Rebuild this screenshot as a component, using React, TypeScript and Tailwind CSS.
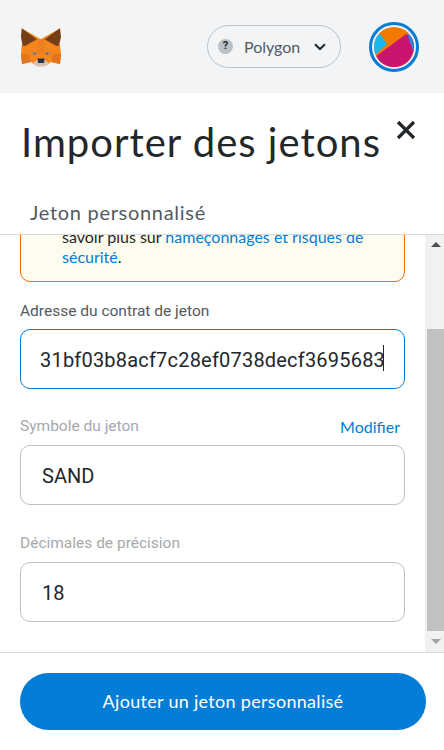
function FoxLogo() {
  return (
    <svg width="42" height="40" viewBox="0 0 42 40" className="shrink-0">
      {/* head */}
      <polygon points="1.7,18 4,16 20.7,12.3 37.5,16 40,18 41,27 40,37 31,35 27,38 15,38 11,35 2,37 1,27" fill="#f6851b" />
      <polygon points="1.7,1.3 20.7,12.3 40,1.3 38,10 30,14 12,14 4,10" fill="#f6851b" />
      {/* ears */}
      <polygon points="1.7,1.3 17,12.5 12,15 5,19 2.5,18.5 1,10" fill="#763d16" />
      <polygon points="40,1.3 24.5,12.5 29.5,15 36.5,19 39,18.5 41,10" fill="#763d16" />
      <polygon points="18,13 24,13 25,27 17,27" fill="#ec7f1f" />
      <polygon points="2,37 1,27 9,27 11,35" fill="#e4751f" />
      <polygon points="40,37 41,27 33,27 31,35" fill="#e4751f" />
      {/* eyes */}
      <polygon points="10,25.5 16.5,24.5 16.5,27.5 13,27.5" fill="#b98a5f" />
      <polygon points="32,25.5 25.5,24.5 25.5,27.5 29,27.5" fill="#b98a5f" />
      <polygon points="13.5,26 16,25.5 16,27.5 14,27.5" fill="#5d6a80" />
      <polygon points="28.5,26 26,25.5 26,27.5 28,27.5" fill="#5d6a80" />
      {/* chin and nose */}
      <polygon points="13,36 17,33 25,33 29,36 25.5,39.5 16.5,39.5" fill="#d7c1b3" />
      <polygon points="17.5,31.5 24.5,31.5 24,36 18,36" fill="#233447" />
    </svg>
  );
}

function AccountIcon() {
  return (
    <div className="flex h-[50px] w-[50px] items-center justify-center rounded-full border-[3px] border-[#037dd6]">
      <svg width="40" height="40" viewBox="0 0 40 40" className="rounded-full">
        <rect width="40" height="40" fill="#f37a00" />
        <polygon points="0,29 13,17 6,7 0,10" fill="#18b8f0" />
        <polygon points="1,30 32,7 40,12 40,40 0,40" fill="#c9156e" />
        <polygon points="33,6 38,10 40,24 39,24" fill="#2f80e8" />
      </svg>
    </div>
  );
}

interface FieldProps {
  label: string;
  value: string;
  focused?: boolean;
  disabled?: boolean;
  action?: string;
}

function Field({ label, value, focused, disabled, action }: FieldProps) {
  return (
    <div>
      <div className="flex h-[18px] items-center justify-between pr-[5px] pt-[2px]">
        <label className={`text-[15.5px] ${disabled ? "text-[#a5a9ad]" : "text-[#535a61]"}`}>{label}</label>
        {action && <span className="font-['Lato',sans-serif] text-[16px] text-[#037dd6]">{action}</span>}
      </div>
      <div
        className={`relative h-[60px] rounded-[10px] border ${disabled ? "mt-[10px]" : "mt-[9px]"} ${
          focused ? "border-[#037dd6]" : "border-[#bbc0c5]"
        }`}
      >
        <input
          readOnly
          value={value}
          className={`h-full w-full bg-transparent pt-[2px] text-[20px] text-[#24272a] outline-none ${
            focused ? "pl-[19px] tracking-[0.2px]" : "pl-[21px]"
          }`}
        />
        {focused && <span className="absolute left-[362px] top-[15px] h-[26px] w-px bg-[#24272a]" />}
      </div>
    </div>
  );
}

export default function App() {
  return (
    <div className="flex h-[750px] w-[444px] flex-col overflow-hidden bg-white font-['Roboto',sans-serif]">
      <header className="flex h-[93px] shrink-0 items-center justify-between bg-[#f2f4f6] pl-[20px] pr-[25px]">
        <FoxLogo />
        <div className="flex items-center gap-[28px]">
          <div className="flex h-[43px] w-[134px] items-center rounded-full border border-[#bbc0c5] pl-[10px]">
            <span className="flex h-[15px] w-[15px] items-center justify-center rounded-full bg-[#bbc0c5] text-[11px] font-bold text-[#24272a]">
              ?
            </span>
            <span className="ml-[11px] font-['Lato',sans-serif] text-[16px] text-[#535a61]">Polygon</span>
            <svg width="12" height="8" viewBox="0 0 12 8" className="ml-[14px]" fill="none" stroke="#24272a" strokeWidth="2">
              <path d="M1 1.2 L6 6 L11 1.2" />
            </svg>
          </div>
          <AccountIcon />
        </div>
      </header>

      <div className="relative shrink-0 px-[21px] pt-[24px]">
        <h1 className="h-[50px] whitespace-nowrap font-['Lato',sans-serif] text-[40px] font-normal leading-[50px] tracking-[1px] text-[#24272a]">
          Importer des jetons
        </h1>
        <svg width="20" height="20" viewBox="0 0 20 20" className="absolute left-[396px] top-[27px]" stroke="#24272a" strokeWidth="3.2">
          <path d="M2 2 L18 18 M18 2 L2 18" />
        </svg>
        <div className="pl-[9px] pt-[33px] font-['Lato',sans-serif] text-[20px] leading-[24px] tracking-[0.7px] text-[#535a61]">
          Jeton personnalisé
        </div>
      </div>

      <div className="mt-[10px] flex h-[419px] shrink-0 border-b border-t border-[#d6d9dc]">
        <div className="min-w-0 flex-1 overflow-hidden pl-[20px] pr-[20px]">
          <div className="-mt-[10px] rounded-b-[10px] border border-[#f66a0a] bg-[#fefcef] pb-[14px] pl-[41px] pr-[20px] pt-[1px] font-['Lato',sans-serif] text-[16px] leading-[20px] text-[#24272a]">
            <p className="whitespace-nowrap">
              savoir plus sur <span className="text-[#037dd6]">hameçonnages et risques de</span>
            </p>
            <p className="text-[#037dd6]">
              sécurité<span className="text-[#24272a]">.</span>
            </p>
          </div>
          <div className="mt-[20px] flex flex-col gap-[28px]">
            <Field label="Adresse du contrat de jeton" value="31bf03b8acf7c28ef0738decf3695683" focused />
            <Field label="Symbole du jeton" value="SAND" disabled action="Modifier" />
            <div className="mt-px">
              <Field label="Décimales de précision" value="18" disabled />
            </div>
          </div>
        </div>
        <div className="flex w-[19px] shrink-0 flex-col items-center bg-[#f1f1f1] pl-[2px]">
          <div className="flex h-[94px] items-start pt-[7px]">
            <span className="h-0 w-0 border-x-[5px] border-b-[5px] border-x-transparent border-b-[#505050]" />
          </div>
          <div className="h-[302px] w-full bg-[#c1c1c1]" />
          <div className="flex flex-1 items-center">
            <span className="h-0 w-0 border-x-[5px] border-t-[5px] border-x-transparent border-t-[#a3a3a3]" />
          </div>
        </div>
      </div>

      <div className="px-[18px] pl-[20px] pt-[20px]">
        <button className="h-[57px] w-[406px] rounded-full bg-[#037dd6] font-['Lato',sans-serif] text-[18px] tracking-[0.3px] text-white">
          Ajouter un jeton personnalisé
        </button>
      </div>
    </div>
  );
}
